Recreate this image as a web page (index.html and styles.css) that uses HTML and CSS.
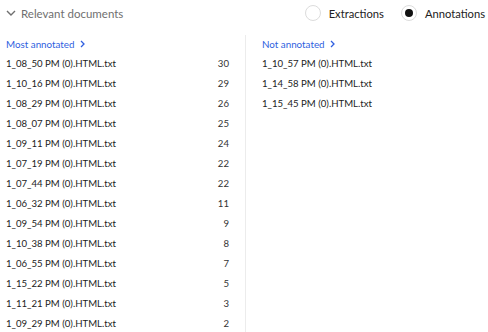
FILE: index.html
```html
<!DOCTYPE html>
<html lang="en">
<head>
  <meta charset="UTF-8" />
  <title>Relevant documents</title>
  <link rel="stylesheet" href="styles.css">
</head>
<body>
  <!-- Cabeçalho -->
  <div class="top">
    <div class="toggle">
      <svg width="10" height="6" viewBox="0 0 10 6"><path d="M1 1l4 4 4-4" fill="none" stroke="#6f6f6f" stroke-width="1.4"/></svg>
      <span>Relevant documents</span>
    </div>
    <div class="radios">
      <label class="radio"><span class="dot"></span>Extractions</label>
      <label class="radio on"><span class="dot"></span>Annotations</label>
    </div>
  </div>

  <div class="cols">
    <div class="col left">
      <a class="title" href="#">Most annotated <svg class="arr" width="5" height="8" viewBox="0 0 5 8"><path d="M1 1l3 3-3 3" fill="none" stroke="#2f5fe0" stroke-width="1.3"/></svg></a>
      <ul>
        <li><span>1_08_50 PM (0).HTML.txt</span><b>30</b></li>
        <li><span>1_10_16 PM (0).HTML.txt</span><b>29</b></li>
        <li><span>1_08_29 PM (0).HTML.txt</span><b>26</b></li>
        <li><span>1_08_07 PM (0).HTML.txt</span><b>25</b></li>
        <li><span>1_09_11 PM (0).HTML.txt</span><b>24</b></li>
        <li><span>1_07_19 PM (0).HTML.txt</span><b>22</b></li>
        <li><span>1_07_44 PM (0).HTML.txt</span><b>22</b></li>
        <li><span>1_06_32 PM (0).HTML.txt</span><b>11</b></li>
        <li><span>1_09_54 PM (0).HTML.txt</span><b>9</b></li>
        <li><span>1_10_38 PM (0).HTML.txt</span><b>8</b></li>
        <li><span>1_06_55 PM (0).HTML.txt</span><b>7</b></li>
        <li><span>1_15_22 PM (0).HTML.txt</span><b>5</b></li>
        <li><span>1_11_21 PM (0).HTML.txt</span><b>3</b></li>
        <li><span>1_09_29 PM (0).HTML.txt</span><b>2</b></li>
      </ul>
    </div>
    <div class="col right">
      <a class="title" href="#">Not annotated <svg class="arr" width="5" height="8" viewBox="0 0 5 8"><path d="M1 1l3 3-3 3" fill="none" stroke="#2f5fe0" stroke-width="1.3"/></svg></a>
      <ul>
        <li><span>1_10_57 PM (0).HTML.txt</span></li>
        <li><span>1_14_58 PM (0).HTML.txt</span></li>
        <li><span>1_15_45 PM (0).HTML.txt</span></li>
      </ul>
    </div>
  </div>
</body>
</html>
```

FILE: styles.css
```css
* { box-sizing: border-box; }
body {
  margin: 0;
  font-family: Lato, "Noto Sans", sans-serif;
  font-size: 9.6px;
  color: #222;
  background: #fff;
  overflow: hidden;
}
.top {
  display: flex;
  justify-content: space-between;
  align-items: center;
  height: 26px;
  padding: 0 3px 0 6px;
}
.toggle {
  display: flex;
  align-items: center;
  gap: 5px;
  color: #6f6f6f;
  font-size: 11.5px;
}
.radios {
  display: flex;
  align-items: center;
  gap: 17px;
  font-size: 11.2px;
  color: #222;
}
.radio {
  display: flex;
  align-items: center;
  gap: 8px;
}
.dot {
  width: 16px;
  height: 16px;
  border: 1px solid #dcdcdc;
  border-radius: 50%;
  display: flex;
  align-items: center;
  justify-content: center;
}
.radio.on .dot::after {
  content: "";
  width: 8px;
  height: 8px;
  border-radius: 50%;
  background: #111;
}
.cols {
  display: flex;
  margin-top: 9px;
}
.col { padding-top: 2px; }
.left {
  width: 245px;
  padding-left: 6px;
  padding-right: 16px;
}
.right {
  flex: 1;
  border-left: 1px solid #ececec;
  padding-left: 16px;
}
.title {
  display: flex;
  align-items: center;
  color: #2f5fe0;
  text-decoration: none;
  height: 14px;
  font-size: 9.8px;
}
.arr { margin-left: 5px; }
ul {
  list-style: none;
  margin: 0;
  padding: 0;
}
li {
  display: flex;
  justify-content: space-between;
  height: 20px;
  line-height: 20px;
}
li:first-child { margin-top: 3px; }
li b { font-weight: normal; color: #333; }
```
